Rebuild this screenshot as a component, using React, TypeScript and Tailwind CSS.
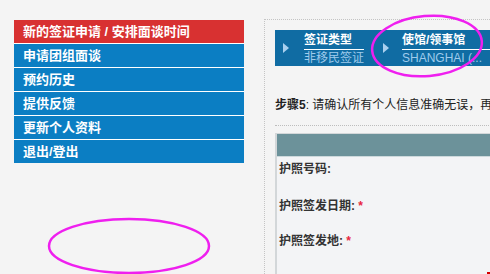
import React from "react";

const menu = ["申请团组面谈", "预约历史", "提供反馈", "更新个人资料", "退出/登出"];

function Arrow() {
  return (
    <svg width="6" height="10" viewBox="0 0 6 10" className="shrink-0">
      <polygon points="0,0 6,5 0,10" fill="#a9d0ef" />
    </svg>
  );
}

export default function App() {
  return (
    <div className="relative flex h-[274px] w-[490px] overflow-hidden bg-[#f4f4f4] font-['Liberation_Sans','Noto_Sans_CJK_SC',sans-serif]">
      <div className="ml-[14px] mt-[20px] w-[230px] shrink-0">
        <div className="h-[23px] bg-[#d83131] pl-[9px] text-[13px] font-bold leading-[23px] text-white">
          新的签证申请 / 安排面谈时间
        </div>
        {menu.map((m) => (
          <div
            key={m}
            className="h-[24px] border-t border-white bg-[#0b7ec3] pl-[9px] text-[13px] font-bold leading-[23px] text-white"
          >
            {m}
          </div>
        ))}
      </div>

      <div className="ml-[20px] mt-[19px] w-[300px] shrink-0 border-l border-t border-dotted border-[#c4c4c4] pl-[10px] pt-[10px]">
        <div className="flex h-[36px] w-[290px] items-center bg-[#106ca3]">
          <div className="flex items-center pl-[8px]">
            <Arrow />
            <div className="ml-[15px] pt-[1px]">
              <div className="border-b border-white pb-[2px] text-[12px] font-bold leading-[14px] text-white">签证类型</div>
              <div className="pt-[1px] text-[12px] leading-[14px] text-[#9fcbec]">非移民签证</div>
            </div>
          </div>
          <div className="flex items-center pl-[19px]">
            <Arrow />
            <div className="ml-[13px] w-[120px] pt-[1px]">
              <div className="border-b border-white pb-[2px] text-[12px] font-bold leading-[14px] text-white">使馆/领事馆</div>
              <div className="whitespace-nowrap pt-[1px] text-[12px] leading-[14px] text-[#9fcbec]">SHANGHAI (...</div>
            </div>
          </div>
        </div>

        <div className="mt-[31px] whitespace-nowrap text-[12px] leading-[16px] text-[#222]">
          <span className="font-bold">步骤5</span>: 请确认所有个人信息准确无误，再提交申请
        </div>

        <div className="mt-[12px] w-[290px] border-t border-dotted border-[#bdbdbd]" />

        <div className="mt-[7px] h-[200px] w-[290px] border-l-2 border-t border-[#d3d7d9] bg-[#f3f4f6]">
          <div className="h-[23px] border-b border-[#cdd9dc] bg-[#6c929a]" />
          <div className="pl-[2px] pt-[4px] text-[12px] font-bold leading-[16px] text-[#333]">
            <div>护照号码:</div>
            <div className="mt-[21px]">
              护照签发日期: <span className="text-[#e8263f]">*</span>
            </div>
            <div className="mt-[19px]">
              护照签发地: <span className="text-[#e8263f]">*</span>
            </div>
          </div>
        </div>
      </div>

      <div className="absolute bottom-0 right-0 h-[2px] w-[3px] bg-[#d40000]" />

      <svg className="pointer-events-none absolute left-0 top-0" width="490" height="274">
        <ellipse cx="427" cy="46" rx="55" ry="30" fill="none" stroke="#ef1fef" strokeWidth="2.5" transform="rotate(-5 427 46)" />
        <ellipse cx="129" cy="246" rx="80" ry="27" fill="none" stroke="#ef1fef" strokeWidth="2.5" />
      </svg>
    </div>
  );
}
